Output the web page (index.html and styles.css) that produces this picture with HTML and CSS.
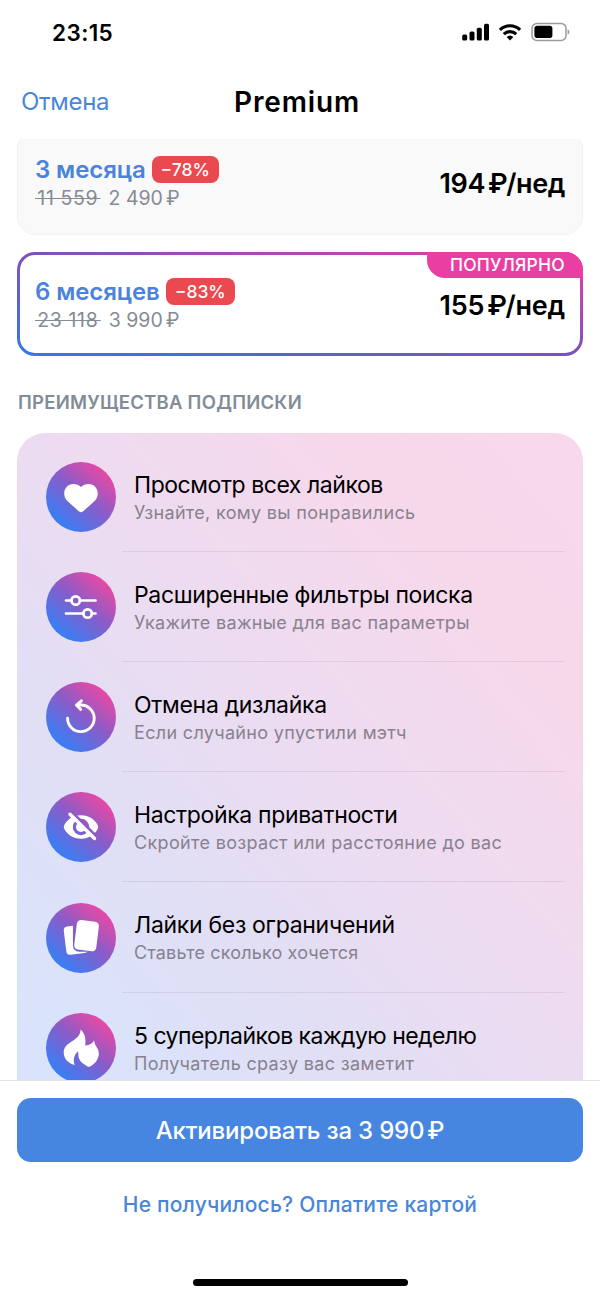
FILE: index.html
```html
<!DOCTYPE html>
<html lang="ru">
<head>
<meta charset="utf-8">
<title>Premium</title>
<link rel="stylesheet" href="styles.css">
</head>
<body>
<div class="screen">
  <div class="status">
    <span class="time">23:15</span>
    <div class="status-icons">
      <svg width="28" height="18" viewBox="0 0 28 18"><rect x="0.2" y="11.5" width="5" height="6" rx="1.6"/><rect x="7.5" y="8.5" width="5" height="9" rx="1.6"/><rect x="14.8" y="4.7" width="5" height="12.8" rx="1.6"/><rect x="22" y="0.7" width="5" height="16.8" rx="1.6"/></svg>
      <svg class="wifi" width="24" height="18" viewBox="0 0 24 18"><g fill="none" stroke="#000" stroke-width="3.2"><path d="M1.9 6.8a14.6 14.6 0 0 1 20.2 0"/><path d="M5.8 11.1a9 9 0 0 1 12.4 0"/></g><path d="M8.6 14a5 5 0 0 1 6.8 0L12 17.5z"/></svg>
      <svg class="battery" width="39" height="20" viewBox="0 0 39 20"><rect x="1" y="1.4" width="34" height="17" rx="5" fill="none" stroke="#9b9b9b" stroke-width="1.5"/><rect x="3.4" y="3.8" width="18" height="12.2" rx="2.8"/><path d="M36.6 7.2q1.9 1 1.9 2.8t-1.9 2.8z" fill="#9b9b9b"/></svg>
    </div>
  </div>
  <header class="nav">
    <a class="cancel">Отмена</a>
    <h1 class="title">Premium</h1>
  </header>
  <main class="content">
    <section class="plan plan-plain">
      <div class="plan-info">
        <div class="plan-head"><span class="plan-name">3 месяца</span><span class="discount">−78%</span></div>
        <div class="plan-price"><s>&#8202;11 559&#8202;</s><span>2 490<i class="rub">₽</i></span></div>
      </div>
      <div class="weekly">194<i class="rub">₽</i>/нед</div>
    </section>
    <section class="plan plan-active">
      <div class="plan-info">
        <div class="plan-head"><span class="plan-name">6 месяцев</span><span class="discount">−83%</span></div>
        <div class="plan-price"><s>&#8202;23 118&#8202;</s><span>3 990<i class="rub">₽</i></span></div>
      </div>
      <div class="weekly">155<i class="rub">₽</i>/нед</div>
      <span class="popular">ПОПУЛЯРНО</span>
    </section>
    <h2 class="section-title">ПРЕИМУЩЕСТВА ПОДПИСКИ</h2>
    <ul class="benefits">
      <li class="benefit likes">
        <div class="icon"><svg viewBox="0 0 70 70"><path fill="#fff" d="M35 50.2c-1.2 0-2.2-.8-4.2-2.6l-8.600-7.800C19.500 37.300 18.200 34.700 18.200 31.500c0-5.500 4-9.600 9-9.600 3.200 0 5.900 1.200 7.800 3 1.900-1.800 4.600-3 7.800-3 5 0 9 4.100 9 9.600 0 3.200-1.300 5.800-4 8.300l-8.600 7.800c-2 1.800-3 2.600-4.200 2.600z"/></svg></div>
        <div class="text"><div class="name">Просмотр всех лайков</div><div class="note">Узнайте, кому вы понравились</div></div>
      </li>
      <li class="benefit filters">
        <div class="icon"><svg viewBox="0 0 70 70"><g fill="none" stroke="#fff" stroke-width="2.700" stroke-linecap="round"><path d="M20 28.500h5.400M34 28.500h15.500M20 41.500h17.300M45.900 41.500H49.500"/><circle cx="29.700" cy="28.500" r="4.200"/><circle cx="41.600" cy="41.500" r="4.200"/></g></svg></div>
        <div class="text"><div class="name">Расширенные фильтры поиска</div><div class="note">Укажите важные для вас параметры</div></div>
      </li>
      <li class="benefit undo">
        <div class="icon"><svg viewBox="0 0 70 70"><path fill="none" stroke="#fff" stroke-width="2.900" stroke-linecap="round" stroke-linejoin="round" d="M21.600 36.200a13.300 13.300 0 1 0 13.300-13.200h-4M35.400 18.800l-5 4.200 4.300 4.500"/></svg></div>
        <div class="text"><div class="name">Отмена дизлайка</div><div class="note">Если случайно упустили мэтч</div></div>
      </li>
      <li class="benefit privacy">
        <div class="icon"><svg viewBox="0 0 70 70"><defs><mask id="slash"><path fill="#fff" d="M0 0h70v70H0z"/><path stroke="#000" stroke-width="3" fill="none" d="M21 15.200 56 50"/></mask></defs><g mask="url(#slash)"><path fill="#fff" fill-rule="evenodd" d="M35 23.200c9.300 0 14.500 5.600 16.800 10q.9 1.800 0 3.600C49.500 41.200 44.300 46.800 35 46.800S20.500 41.200 18.200 36.800q-.9-1.800 0-3.600C20.500 28.800 25.700 23.200 35 23.200zm0 3.600a8.200 8.200 0 1 0 0 16.400 8.200 8.200 0 0 0 0-16.400z"/><path d="M35 30a5 5 0 1 0 5 5z" fill="#fff"/></g><path d="M24 22.200 48.500 46.500" fill="none" stroke="#fff" stroke-width="3.400" stroke-linecap="round"/></svg></div>
        <div class="text"><div class="name">Настройка приватности</div><div class="note">Скройте возраст или расстояние до вас</div></div>
      </li>
      <li class="benefit unlimited">
        <div class="icon"><svg viewBox="0 0 70 70"><defs><mask id="card"><path fill="#fff" d="M0 0h70v70H0z"/><rect x="27.500" y="15.500" width="26" height="34.500" rx="6" transform="rotate(7 40 33)" fill="#000"/></mask></defs><rect x="19" y="22.500" width="22" height="28.500" rx="4" transform="rotate(-7 30 37)" fill="#fff" mask="url(#card)"/><rect x="29.400" y="17.700" width="22.200" height="29.800" rx="4.200" transform="rotate(7 40 33)" fill="#fff"/></svg></div>
        <div class="text"><div class="name">Лайки без ограничений</div><div class="note">Ставьте сколько хочется</div></div>
      </li>
      <li class="benefit superlikes">
        <div class="icon"><svg viewBox="0 0 70 70"><path fill="#fff" d="M34.600 16.600C38.200 19.500 39.500 23.500 39.500 28.200c0 1.500-.2 2.800-.3 4.200 4.500-.4 7.900-2.200 8.800-5.200.5 1.700.6 3 1.300 4.600 1.200 2.400 3.500 4.500 3.500 9 0 5.300-4.300 11.300-9.800 13.200-5.200-2.500-9.200-5.500-10.300-9.600-.5-2-.3-4-.5-6.100-2.400 1.600-4.100 4.800-4.400 8.200-.1 1.900.2 3.600.8 5.400-6.300-1.500-10.900-6.600-10.900-12.500 0-5.300 3.900-8.500 8.500-11.200 5-2.900 8.300-6.300 8.400-11.600z"/></svg></div>
        <div class="text"><div class="name">5 суперлайков каждую неделю</div><div class="note">Получатель сразу вас заметит</div></div>
      </li>
    </ul>
  </main>
  <footer class="footer">
    <button class="activate">Активировать за 3 990<i class="rub">₽</i></button>
    <a class="card-link">Не получилось? Оплатите картой</a>
    <div class="home"></div>
  </footer>
</div>
</body>
</html>
```
FILE: styles.css
```css
* { box-sizing: border-box; }
body { margin: 0; background: #fff; font-family: Inter, "Liberation Sans", sans-serif; color: #000; }
.screen { width: 600px; height: 1298px; display: flex; flex-direction: column; overflow: hidden; white-space: nowrap; }
.status { height: 66px; padding: 0 30px 2px 52px; display: flex; align-items: center; justify-content: space-between; flex: none; }
.time { font-size: 22.5px; font-weight: 600; letter-spacing: .4px; }
.status-icons { display: flex; align-items: center; }
.wifi { margin-left: 8px; }
.battery { margin-left: 9px; }
.nav { height: 73px; padding: 0 0 2px 21px; display: grid; grid-template-columns: 213px 1fr; align-items: center; flex: none; }
.cancel { font-size: 24px; color: #4986dc; letter-spacing: -.3px; }
.title { margin: 0; font-size: 28px; font-weight: 600; letter-spacing: .85px; }
.content { height: 941px; padding: 0 17px; overflow: hidden; flex: none; }
.plan { height: 104px; border-radius: 18px; display: flex; justify-content: space-between; padding: 0 18px; }
.plan-plain { margin-top: -8px; background: #f9f9f9; border: 1px solid #f2f2f2; padding: 0 17px; }
.plan-active { position: relative; margin-top: 17px; border: 3px solid transparent; padding: 0 15px; background: linear-gradient(#fff, #fff) padding-box, linear-gradient(to top right, #3478e6, #7c51bd 50%, #e83ea3) border-box; }
.plan-info { padding-top: 23px; }
.plan-active .plan-info { padding-top: 22px; }
.plan-head { height: 28px; display: flex; align-items: center; gap: 6px; }
.plan-name { color: #4a82dc; font-size: 24px; font-weight: 600; letter-spacing: -.1px; }
.discount { height: 27px; padding: 0 9px; border-radius: 8px; background: #e9494f; color: #fff; font-size: 17.5px; line-height: 27px; font-weight: 500; }
.plan-price { display: flex; gap: 8px; font-size: 19.5px; line-height: 31px; color: #858b94; }
.plan-price s { letter-spacing: .6px; }
.rub { font-style: normal; margin-left: 3px; }
.weekly { font-size: 27px; font-weight: 600; line-height: 104px; letter-spacing: -.4px; }
.plan-active .weekly { line-height: 101px; letter-spacing: -.25px; }
.popular { position: absolute; top: -3px; right: -3px; width: 156px; height: 26px; border-radius: 0 18px 0 18px; background: #e93fa2; color: #fff; font-size: 17.5px; line-height: 26px; font-weight: 500; padding-left: 23px; letter-spacing: .2px; }
.section-title { margin: 34px 0 0; height: 43px; padding-left: 1px; font-size: 18.5px; line-height: 24px; font-weight: 600; letter-spacing: .25px; color: #828c97; }
.benefits { list-style: none; margin: 0; height: 800px; padding: 8.7px 18px 0 29px; border-radius: 28px; background: linear-gradient(to bottom left, #f8d8ec, #f7d8eb 22%, #ecdcf1 50%, #e0dff5 72%, #d9e4fc 95%) 0 0 / 100% 647px no-repeat; }
.benefit { height: 110.2px; display: flex; align-items: center; }
.icon { width: 70px; height: 70px; border-radius: 50%; background: linear-gradient(40deg, #3e7cf2 18%, #8a5cc8 53%, #e34aa6 84%); flex: none; }
.icon svg { display: block; width: 70px; height: 70px; }
.text { flex: 1; height: 100%; margin-left: 6px; padding: 28px 0 0 12px; border-bottom: 1px solid rgba(90, 60, 110, .1); }
.benefit:last-child .text { border: 0; }
.name { font-size: 23px; line-height: 31px; letter-spacing: -.35px; }
.note { font-size: 18px; line-height: 24px; color: #88818f; letter-spacing: .33px; }
.likes .name { letter-spacing: -.45px; }
.undo .name, .unlimited .name { letter-spacing: -.3px; }
.superlikes .name { letter-spacing: -.53px; }
.unlimited .note { letter-spacing: .15px; }
.footer { height: 218px; border-top: 1px solid #e4e4e6; padding: 17px 17px 0; display: flex; flex-direction: column; align-items: center; flex: none; }
.activate { width: 100%; height: 64px; border: 0; border-radius: 14px; background: #4686e1; color: #fff; font: 500 24px/64px Inter, "Liberation Sans", sans-serif; letter-spacing: -.18px; padding: 1px 0 0; }
.card-link { margin-top: 27px; font-size: 21px; line-height: 32px; font-weight: 500; letter-spacing: .2px; color: #4a86d8; }
.home { margin-top: 58px; width: 215px; height: 7px; border-radius: 4px; background: #000; }
```
